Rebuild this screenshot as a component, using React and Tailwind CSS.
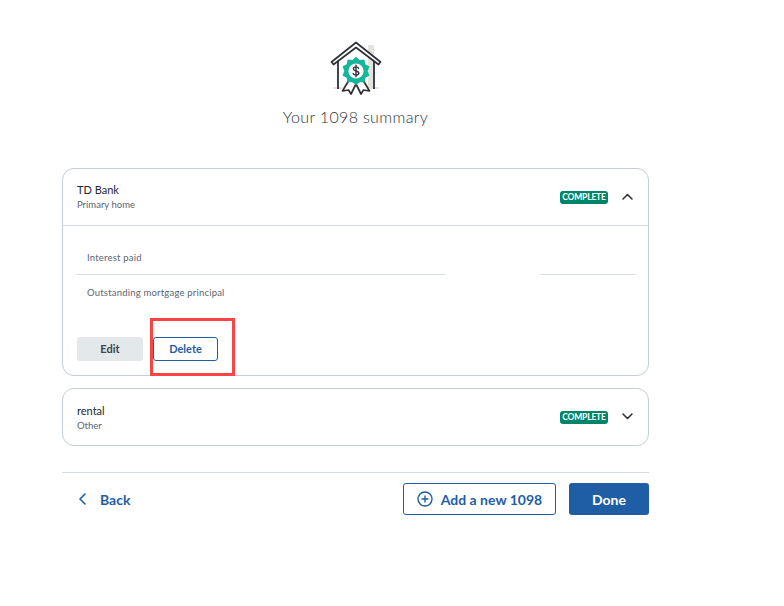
import React from "react";

const BADGE_POINTS = Array.from({ length: 20 }, (_, i) => {
  const r = i % 2 === 0 ? 14.2 : 11.6;
  const a = (i * Math.PI) / 10 - Math.PI / 2;
  return `${(26 + r * Math.cos(a)).toFixed(2)},${(30 + r * Math.sin(a)).toFixed(2)}`;
}).join(" ");

function HouseIcon() {
  return (
    <svg width="52" height="54" viewBox="0 0 52 54" fill="none" className="block">
      <rect x="38" y="4" width="6" height="43" fill="#e3e4de" />
      <rect x="3" y="46" width="9" height="2" fill="#e3e4de" />
      <rect x="40" y="46" width="9" height="2" fill="#e3e4de" />
      <path d="M1.5 21 L26 1.5 L50.5 21 L48.5 23.5 L26 6.5 L3.5 23.5 Z" stroke="#2f3237" strokeWidth="1.7" strokeLinejoin="round" fill="#fff" />
      <path d="M8 20 V48 M44 20 V48" stroke="#2f3237" strokeWidth="1.8" />
      <path d="M19 39 L12.5 50 L18.5 49 L21 53 L26.5 42 Z" stroke="#2f3237" strokeWidth="1.7" strokeLinejoin="round" fill="#fff" />
      <path d="M33 39 L39.5 50 L33.5 49 L31 53 L25.5 42 Z" stroke="#2f3237" strokeWidth="1.7" strokeLinejoin="round" fill="#fff" />
      <polygon points={BADGE_POINTS} fill="#14b79a" />
      <circle cx="26" cy="30" r="7.6" fill="#fff" />
      <path d="M28.6 27.4 C28 26.3 27.1 25.9 26 25.9 C24.5 25.9 23.4 26.6 23.4 27.9 C23.4 30.6 28.8 29.3 28.8 32.1 C28.8 33.4 27.5 34.1 26 34.1 C24.7 34.1 23.7 33.6 23.2 32.5 M26 24.3 V35.7" stroke="#2f3237" strokeWidth="1.4" strokeLinecap="round" />
    </svg>
  );
}

function Badge() {
  return (
    <span className="flex h-[13px] w-[48px] items-center justify-center rounded-[3px] bg-[#00856b] text-[8.5px] font-bold leading-none tracking-[-0.2px] text-white">
      COMPLETE
    </span>
  );
}

function Chevron({ up }) {
  return (
    <svg width="11" height="7" viewBox="0 0 11 7" fill="none" className="mb-[1px]">
      <path d={up ? "M1 6 L5.5 1.5 L10 6" : "M1 1 L5.5 5.5 L10 1"} stroke="#2b2f33" strokeWidth="1.5" strokeLinecap="round" strokeLinejoin="round" />
    </svg>
  );
}

function CardHeader({ title, sub, up, className, textClass }) {
  return (
    <div className={"flex items-center justify-between pl-[14px] pr-[15px] " + className}>
      <div className={textClass}>
        <div className="text-[11px] leading-[14px] text-[#24272b]">{title}</div>
        <div className="text-[9.5px] leading-[15px] text-[#5c6470]">{sub}</div>
      </div>
      <div className="flex items-center gap-[14px]">
        <Badge />
        <Chevron up={up} />
      </div>
    </div>
  );
}

export default function App() {
  return (
    <div className="relative h-[606px] w-[784px] overflow-hidden bg-white pl-[62px] pt-[41px] font-['Lato','Noto_Sans',sans-serif]">
      <div className="w-[587px]">
        <div className="flex flex-col items-center">
          <HouseIcon />
          <h1 className="mt-[12px] text-[16px] font-light leading-[20px] tracking-[0.35px] text-[#2f3338]">
            Your 1098 summary
          </h1>
        </div>

        <div className="mt-[41px] h-[208px] rounded-[12px] border border-[#c3ced6]">
          <CardHeader title="TD Bank" sub="Primary home" up className="h-[57px] border-b border-[#d5dce1]" />
          <div className="pl-[14px] pr-[13px]">
            <div className="flex h-[49px] justify-between">
              <div className="flex h-[49px] w-[368px] items-end border-b border-[#d5dce1] pb-[9px] pl-[10px] text-[9.5px] leading-[14px] tracking-[0.2px] text-[#5c6470]">
                Interest paid
              </div>
              <div className="h-[49px] w-[94px] border-b border-[#d5dce1]" />
            </div>
            <div className="pl-[10px] pt-[11px] text-[9.5px] leading-[14px] tracking-[0.2px] text-[#5c6470]">
              Outstanding mortgage principal
            </div>
            <div className="mt-[37px] flex gap-[10px]">
              <button className="h-[24px] w-[66px] rounded-[3px] bg-[#e3e8eb] text-[11px] font-bold text-[#3d4247]">Edit</button>
              <button className="h-[24px] w-[65px] rounded-[3px] border border-[#1f5ea4] bg-white text-[11px] font-bold text-[#1f5ea4]">Delete</button>
            </div>
          </div>
        </div>

        <div className="mt-[12px] h-[58px] rounded-[12px] border border-[#c3ced6]">
          <CardHeader title="rental" sub="Other" className="h-[56px]" textClass="pt-[2px]" />
        </div>

        <div className="mt-[26px] flex items-center justify-between border-t border-[#d5dce1] pt-[10px]">
          <button className="flex items-center gap-[13px] pl-[16px] text-[14px] font-bold text-[#1f5ea4]">
            <svg width="9" height="12" viewBox="0 0 9 12" fill="none">
              <path d="M7 1 L2 6 L7 11" stroke="#1f5ea4" strokeWidth="1.6" strokeLinecap="round" strokeLinejoin="round" />
            </svg>
            Back
          </button>
          <div className="flex gap-[13px]">
            <button className="flex h-[32px] w-[153px] items-center justify-center gap-[8px] rounded-[3px] border border-[#1f5ea4] text-[14px] font-bold text-[#1f5ea4]">
              <svg width="16" height="16" viewBox="0 0 16 16" fill="none">
                <circle cx="8" cy="8" r="7" stroke="#1f5ea4" strokeWidth="1.4" />
                <path d="M8 5 V11 M5 8 H11" stroke="#1f5ea4" strokeWidth="1.4" strokeLinecap="round" />
              </svg>
              Add a new 1098
            </button>
            <button className="h-[32px] w-[80px] rounded-[3px] bg-[#1f5ea4] text-[14px] font-bold text-white">Done</button>
          </div>
        </div>
      </div>

      <div className="absolute left-[150px] top-[318px] h-[58px] w-[85px] border-[3px] border-[#fb4444]" />
    </div>
  );
}
